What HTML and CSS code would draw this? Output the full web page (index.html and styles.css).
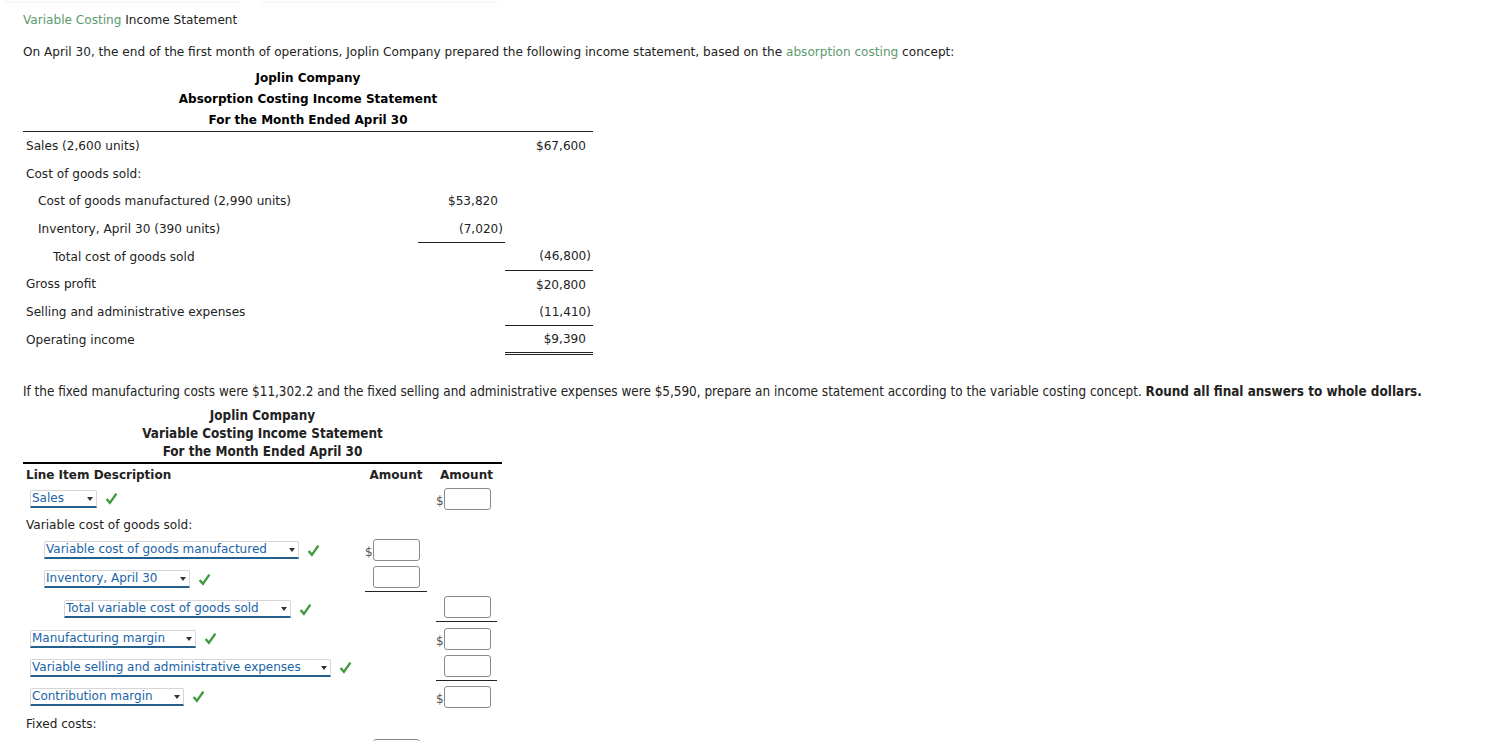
FILE: index.html
```html
<!DOCTYPE html>
<html>
<head>
<meta charset="utf-8">
<link rel="stylesheet" href="styles.css">
</head>
<body>
<div class="tabs"><div class="tab tab-a"></div><div class="tab tab-b"></div></div>
<div class="page">
  <div class="title"><span class="green">Variable Costing</span> Income Statement</div>
  <p class="intro">On April 30, the end of the first month of operations, Joplin Company prepared the following income statement, based on the <span class="green">absorption costing</span> concept:</p>

  <div class="stmt">
    <div class="stmt-head">
      <div>Joplin Company</div>
      <div>Absorption Costing Income Statement</div>
      <div>For the Month Ended April 30</div>
    </div>
    <table class="abs">
      <tr><td class="lbl">Sales (2,600 units)</td><td class="c1"></td><td class="c2">$67,600</td></tr>
      <tr><td class="lbl">Cost of goods sold:</td><td class="c1"></td><td class="c2"></td></tr>
      <tr><td class="lbl ind1">Cost of goods manufactured (2,990 units)</td><td class="c1">$53,820</td><td class="c2"></td></tr>
      <tr><td class="lbl ind1">Inventory, April 30 (390 units)</td><td class="c1 under">(7,020<span class="neg">)</span></td><td class="c2"></td></tr>
      <tr><td class="lbl ind2">Total cost of goods sold</td><td class="c1"></td><td class="c2 under">(46,800<span class="neg">)</span></td></tr>
      <tr><td class="lbl">Gross profit</td><td class="c1"></td><td class="c2">$20,800</td></tr>
      <tr><td class="lbl">Selling and administrative expenses</td><td class="c1"></td><td class="c2 under">(11,410<span class="neg">)</span></td></tr>
      <tr><td class="lbl">Operating income</td><td class="c1"></td><td class="c2 dbl">$9,390</td></tr>
    </table>
  </div>

  <p class="intro2">If the fixed manufacturing costs were $11,302.2 and the fixed selling and administrative expenses were $5,590, prepare an income statement according to the variable costing concept. <b>Round all final answers to whole dollars.</b></p>

  <div class="vstmt">
    <div class="vstmt-head">
      <div>Joplin Company</div>
      <div>Variable Costing Income Statement</div>
      <div>For the Month Ended April 30</div>
    </div>
    <table class="var">
      <tr class="hdr"><th class="lbl">Line Item Description</th><th class="a1"><div class="box1 ctr">Amount</div></th><th class="a2"><div class="box2 ctr">Amount</div></th></tr>
      <tr class="h27"><td class="lbl top"><span class="sel w-sales">Sales</span><svg class="chk" viewBox="0 0 12 12"><path d="M1.5 6.5 L4.5 10 L10.5 1.5"/></svg></td><td class="a1"></td><td class="a2"><div class="box2"><span class="dol">$</span><span class="inp"></span></div></td></tr>
      <tr class="txt"><td class="lbl plain">Variable cost of goods sold:</td><td class="a1"></td><td class="a2"></td></tr>
      <tr class="h28"><td class="lbl ind1"><span class="sel w-vcgm">Variable cost of goods manufactured</span><svg class="chk" viewBox="0 0 12 12"><path d="M1.5 6.5 L4.5 10 L10.5 1.5"/></svg></td><td class="a1"><div class="box1"><span class="dol">$</span><span class="inp"></span></div></td><td class="a2"></td></tr>
      <tr class="h30"><td class="lbl ind1"><span class="sel w-inv">Inventory, April 30</span><svg class="chk" viewBox="0 0 12 12"><path d="M1.5 6.5 L4.5 10 L10.5 1.5"/></svg></td><td class="a1"><div class="box1 under"><span class="dol"></span><span class="inp"></span></div></td><td class="a2"></td></tr>
      <tr class="h30"><td class="lbl ind2"><span class="sel w-tvc">Total variable cost of goods sold</span><svg class="chk" viewBox="0 0 12 12"><path d="M1.5 6.5 L4.5 10 L10.5 1.5"/></svg></td><td class="a1"></td><td class="a2"><div class="box2 under"><span class="dol"></span><span class="inp"></span></div></td></tr>
      <tr class="h29"><td class="lbl top"><span class="sel w-mm">Manufacturing margin</span><svg class="chk" viewBox="0 0 12 12"><path d="M1.5 6.5 L4.5 10 L10.5 1.5"/></svg></td><td class="a1"></td><td class="a2"><div class="box2"><span class="dol">$</span><span class="inp"></span></div></td></tr>
      <tr class="h29"><td class="lbl top"><span class="sel w-vsae">Variable selling and administrative expenses</span><svg class="chk" viewBox="0 0 12 12"><path d="M1.5 6.5 L4.5 10 L10.5 1.5"/></svg></td><td class="a1"></td><td class="a2"><div class="box2 under"><span class="dol"></span><span class="inp"></span></div></td></tr>
      <tr class="h29"><td class="lbl top"><span class="sel w-cm">Contribution margin</span><svg class="chk" viewBox="0 0 12 12"><path d="M1.5 6.5 L4.5 10 L10.5 1.5"/></svg></td><td class="a1"></td><td class="a2"><div class="box2"><span class="dol">$</span><span class="inp"></span></div></td></tr>
      <tr class="txt"><td class="lbl plain">Fixed costs:</td><td class="a1"></td><td class="a2"></td></tr>
      <tr class="h30"><td class="lbl ind1"><span class="sel w-fmc">Fixed manufacturing costs</span><svg class="chk" viewBox="0 0 12 12"><path d="M1.5 6.5 L4.5 10 L10.5 1.5"/></svg></td><td class="a1"><div class="box1"><span class="dol">$</span><span class="inp"></span></div></td><td class="a2"></td></tr>
    </table>
  </div>
</div>
</body>
</html>
```
FILE: styles.css
```css
html, body {
  margin: 0;
  padding: 0;
  background: #fff;
  overflow: hidden;
}
body {
  font-family: "DejaVu Sans", Verdana, sans-serif;
  font-size: 12.1px;
  color: #222;
}
.tabs {
  display: flex;
  gap: 22px;
  padding-left: 5px;
  height: 1px;
}
.tab {
  height: 1px;
  box-shadow: 0 1px 3px rgba(0,0,0,0.12);
}
.tab-a { width: 235px; }
.tab-b { width: 235px; }
.page {
  padding: 0 23px;
}
.green { color: #5c9a6e; }
.title {
  margin-top: 10px;
  line-height: 18px;
}
.intro {
  margin: 14px 0 0;
  line-height: 18px;
}
.stmt { width: 570px; margin-top: 7px; }
.stmt-head {
  text-align: center;
  font-weight: bold;
  font-size: 12px;
  line-height: 21px;
  border-bottom: 1px solid #222;
  color: #000;
}
table { border-collapse: collapse; }
.abs { width: 570px; }
.abs td {
  height: 27.7px;
  padding: 0;
  vertical-align: middle;
  white-space: nowrap;
}
.abs .lbl { padding-left: 3px; }
.abs .ind1 { padding-left: 15px; }
.abs .ind2 { padding-left: 30px; }
.abs .c1 { width: 87px; text-align: right; padding-right: 7px; }
.abs .c2 { width: 88px; text-align: right; padding-right: 7px; }
.abs .c1, .abs .c2 { box-sizing: border-box; }
.neg { margin-right: -5px; }
.abs .under { border-bottom: 1px solid #222; }
.abs .dbl { border-bottom: 3px double #222; }

.intro2 {
  margin: 28px 0 0;
  line-height: 18px;
  font-size: 13.4px;
  font-family: "DejaVu Sans Condensed", "DejaVu Sans", sans-serif;
  font-stretch: condensed;
}
.vstmt { width: 479px; margin-top: 6px; }
.vstmt-head {
  text-align: center;
  font-weight: bold;
  font-size: 13.4px;
  line-height: 18px;
  border-bottom: 2px solid #000;
  font-family: "DejaVu Sans Condensed", "DejaVu Sans", sans-serif;
  font-stretch: condensed;
  padding-bottom: 1px;
}
.var { width: 479px; }
.var th, .var td {
  padding: 0;
  vertical-align: middle;
  white-space: nowrap;
}
.var th { font-weight: bold; font-size: 12px; height: 21px; text-align: left; color: #222; }
.var .lbl { padding-left: 3px; }
.var .top .sel { margin-left: 4px; }
.var .ind1 { padding-left: 21px; }
.var .ind2 { padding-left: 41px; }
.var .a1 { width: 71px; }
.var .a2 { width: 66px; }
.box1 { width: 62px; display: flex; align-items: center; }
.box2 { width: 61px; display: flex; align-items: center; }
.ctr { justify-content: center; }
.box1.under, .box2.under { border-bottom: 1px solid #222; padding-bottom: 3px; }
.var tr.h27 td { height: 27px; }
.var tr.h28 td { height: 28px; }
.var tr.h29 td { height: 29px; }
.var tr.h30 td { height: 30px; }
.var tr.txt td { height: 24px; }
.var tr.txt td.plain { padding-top: 2px; box-sizing: border-box; }
.dol {
  width: 8px;
  font-size: 12px;
  color: #555;
  text-align: left;
  line-height: 12px;
  padding-top: 4px;
}
.inp {
  width: 45px;
  height: 20px;
  border: 1px solid #8a8a8a;
  border-radius: 3px;
  background: #fff;
}
.sel {
  display: inline-block;
  position: relative;
  box-sizing: border-box;
  height: 18px;
  line-height: 15px;
  font-size: 12px;
  padding-left: 1px;
  color: #1a64a8;
  border: 1px solid #d6d6d6;
  border-bottom: 2px solid #245f8e;
  border-radius: 2px 2px 0 0;
  vertical-align: middle;
}
.sel::after {
  content: "";
  position: absolute;
  right: 3px;
  top: 6px;
  border-left: 3.5px solid transparent;
  border-right: 3.5px solid transparent;
  border-top: 4px solid #333;
}
.w-sales { width: 67px; }
.w-vcgm { width: 255px; }
.w-inv { width: 146px; }
.w-tvc { width: 227px; }
.w-mm { width: 166px; }
.w-vsae { width: 301px; }
.w-cm { width: 154px; }
.w-fmc { width: 191px; }
.chk {
  width: 13px;
  height: 13px;
  margin-left: 8px;
  vertical-align: middle;
  fill: none;
  stroke: #3d9b3d;
  stroke-width: 2.2;
}
```
